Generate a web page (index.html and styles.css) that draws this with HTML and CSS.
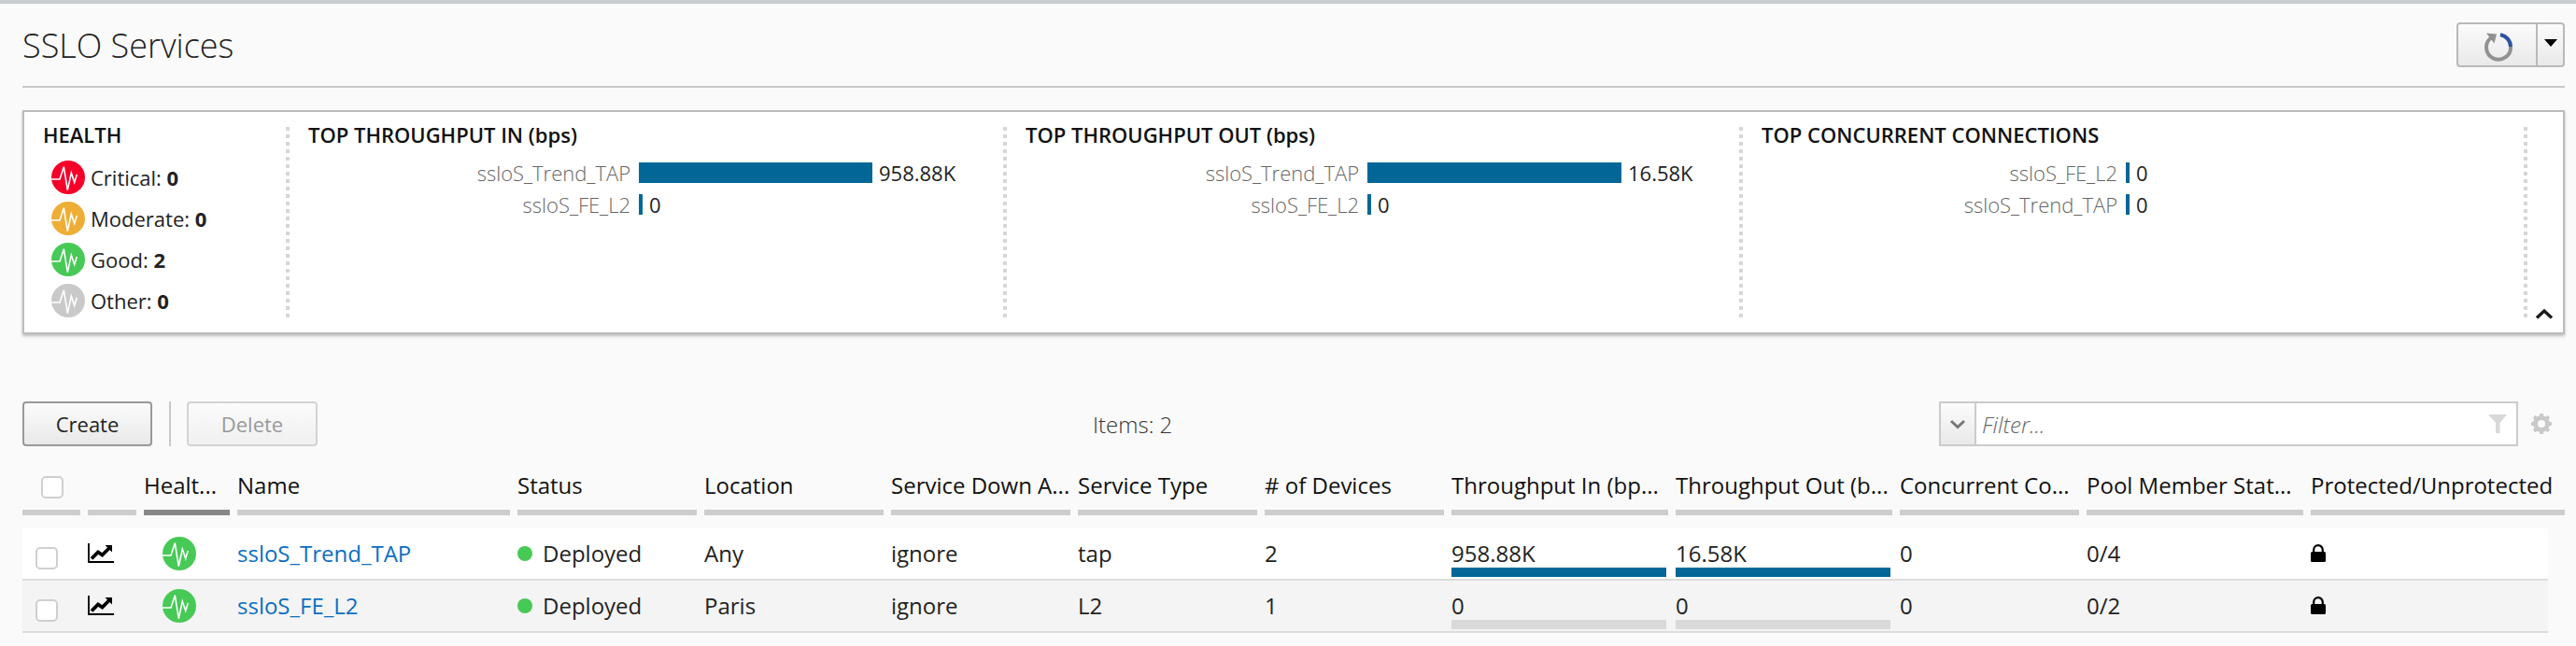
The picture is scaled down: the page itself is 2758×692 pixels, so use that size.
FILE: index.html
```html
<!DOCTYPE html>
<html>
<head>
  <meta charset="utf-8">
  <title>SSLO Services</title>
  <link rel="stylesheet" href="styles.css">
</head>
<body>
  <svg class="defs" width="0" height="0">
    <symbol id="pulse" viewBox="0 0 36 36">
      <circle cx="18" cy="18" r="18" fill="currentColor"/>
      <path d="M0 20H9L13.3 6.7 17.3 31.7 21.3 13.3 24.7 23.3 27.3 15" fill="none" stroke="#fff" stroke-width="1.6"/>
    </symbol>
    <symbol id="trend" viewBox="0 0 28 21">
      <path d="M1 0V20H28" fill="none" stroke="#000" stroke-width="1.8"/>
      <path d="M4 16.5L11 9.5 15.5 12.5 23 5" fill="none" stroke="#000" stroke-width="3.8"/>
      <path d="M18.5 2H26V9.5Z" fill="#000"/>
    </symbol>
    <symbol id="lock" viewBox="0 0 16 19">
      <path d="M3.2 9V6a4.8 4.8 0 0 1 9.6 0V9" fill="none" stroke="#000" stroke-width="2.2"/>
      <rect x="0" y="8" width="16" height="11" rx="1.5" fill="#000"/>
    </symbol>
  </svg>

  <div class="page">
    <header class="title-bar">
      <h1>SSLO Services</h1>
      <div class="refresh">
        <span class="refresh-main">
          <svg width="34" height="34" viewBox="0 0 34 34">
            <path d="M9 7.5A13 13 0 1 0 30 17" fill="none" stroke="#919191" stroke-width="4"/>
            <path d="M19 4.2A13 13 0 0 1 30 17" fill="none" stroke="#2b52a3" stroke-width="4"/>
            <path d="M4 2.5L15 3.5 12.5 13.5Z" fill="#919191"/>
          </svg>
        </span>
        <span class="refresh-drop"><i class="caret"></i></span>
      </div>
    </header>

    <section class="panel">
      <div class="pcol health">
        <h2>HEALTH</h2>
        <ul class="health-list">
          <li><svg class="hicon red"><use href="#pulse"/></svg>Critical:&nbsp;<b>0</b></li>
          <li><svg class="hicon amber"><use href="#pulse"/></svg>Moderate:&nbsp;<b>0</b></li>
          <li><svg class="hicon green"><use href="#pulse"/></svg>Good:&nbsp;<b>2</b></li>
          <li><svg class="hicon grey"><use href="#pulse"/></svg>Other:&nbsp;<b>0</b></li>
        </ul>
      </div>
      <div class="pcol chart-in">
        <h2>TOP THROUGHPUT IN (bps)</h2>
        <div class="bar-row"><span class="bar-label">ssloS_Trend_TAP</span><span class="bar" style="width:250px"></span><span class="bar-val">958.88K</span></div>
        <div class="bar-row"><span class="bar-label">ssloS_FE_L2</span><span class="bar" style="width:4px"></span><span class="bar-val">0</span></div>
      </div>
      <div class="pcol chart-out">
        <h2>TOP THROUGHPUT OUT (bps)</h2>
        <div class="bar-row"><span class="bar-label">ssloS_Trend_TAP</span><span class="bar" style="width:272px"></span><span class="bar-val">16.58K</span></div>
        <div class="bar-row"><span class="bar-label">ssloS_FE_L2</span><span class="bar" style="width:4px"></span><span class="bar-val">0</span></div>
      </div>
      <div class="pcol chart-conc">
        <h2>TOP CONCURRENT CONNECTIONS</h2>
        <div class="bar-row"><span class="bar-label">ssloS_FE_L2</span><span class="bar" style="width:4px"></span><span class="bar-val">0</span></div>
        <div class="bar-row"><span class="bar-label">ssloS_Trend_TAP</span><span class="bar" style="width:4px"></span><span class="bar-val">0</span></div>
      </div>
      <div class="collapse">
        <svg width="20" height="12" viewBox="0 0 20 12"><path d="M2 10.5L10 3 18 10.5" fill="none" stroke="#1c1c1c" stroke-width="3.4"/></svg>
      </div>
    </section>

    <div class="toolbar">
      <button class="btn">Create</button>
      <span class="tool-sep"></span>
      <button class="btn off">Delete</button>
      <span class="items">Items: 2</span>
      <div class="filter">
        <span class="filter-drop">
          <svg width="18" height="11" viewBox="0 0 18 11"><path d="M2 2L9 8.5 16 2" fill="none" stroke="#777" stroke-width="3"/></svg>
        </span>
        <span class="filter-text">Filter...</span>
        <svg class="funnel" width="20" height="20" viewBox="0 0 20 20"><path d="M0 0H20L12.5 9V20H8V9Z" fill="#d8d8d8"/></svg>
      </div>
      <svg class="gear" width="24" height="24" viewBox="0 0 24 24">
        <circle cx="12" cy="12" r="6.5" fill="none" stroke="#c9c9c9" stroke-width="5"/>
        <path d="M12 1V6M12 18V23M1 12H6M18 12H23M4.2 4.2L7.8 7.8M16.2 16.2L19.8 19.8M4.2 19.8L7.8 16.2M16.2 7.8L19.8 4.2" stroke="#c9c9c9" stroke-width="4"/>
      </svg>
    </div>

    <div class="grid head">
      <div class="th"><span class="check"></span></div>
      <div class="th"></div>
      <div class="th sorted">Healt...</div>
      <div class="th">Name</div>
      <div class="th">Status</div>
      <div class="th">Location</div>
      <div class="th">Service Down A...</div>
      <div class="th">Service Type</div>
      <div class="th"># of Devices</div>
      <div class="th">Throughput In (bp...</div>
      <div class="th">Throughput Out (b...</div>
      <div class="th">Concurrent Co...</div>
      <div class="th">Pool Member Stat...</div>
      <div class="th">Protected/Unprotected</div>
    </div>

    <div class="grid row">
      <div class="td"><span class="check"></span></div>
      <div class="td"><svg class="trend"><use href="#trend"/></svg></div>
      <div class="td mid"><svg class="hicon green"><use href="#pulse"/></svg></div>
      <div class="td"><a href="#">ssloS_Trend_TAP</a></div>
      <div class="td"><i class="dot"></i>Deployed</div>
      <div class="td">Any</div>
      <div class="td">ignore</div>
      <div class="td">tap</div>
      <div class="td">2</div>
      <div class="td meter">958.88K<i class="track"><i class="fill" style="width:100%"></i></i></div>
      <div class="td meter">16.58K<i class="track"><i class="fill" style="width:100%"></i></i></div>
      <div class="td">0</div>
      <div class="td">0/4</div>
      <div class="td"><svg class="lock"><use href="#lock"/></svg></div>
    </div>

    <div class="grid row alt">
      <div class="td"><span class="check"></span></div>
      <div class="td"><svg class="trend"><use href="#trend"/></svg></div>
      <div class="td mid"><svg class="hicon green"><use href="#pulse"/></svg></div>
      <div class="td"><a href="#">ssloS_FE_L2</a></div>
      <div class="td"><i class="dot"></i>Deployed</div>
      <div class="td">Paris</div>
      <div class="td">ignore</div>
      <div class="td">L2</div>
      <div class="td">1</div>
      <div class="td meter">0<i class="track"></i></div>
      <div class="td meter">0<i class="track"></i></div>
      <div class="td">0</div>
      <div class="td">0/2</div>
      <div class="td"><svg class="lock"><use href="#lock"/></svg></div>
    </div>
  </div>
</body>
</html>
```

FILE: styles.css
```css
* { box-sizing: border-box; }

html, body {
  margin: 0;
  height: 692px;
  overflow: hidden;
}

body {
  background: #fafafa;
  font-family: "Open Sans", sans-serif;
  font-size: 24px;
  color: #222;
}

.defs { position: absolute; }

.page {
  border-top: 4px solid #c9cdd0;
  padding: 0 12px 0 24px;
}

/* title */
.title-bar {
  height: 90px;
  border-bottom: 2px solid #c8c8c8;
  display: flex;
  justify-content: space-between;
  padding-top: 20px;
}

h1 {
  margin: 0;
  font-size: 36px;
  font-weight: 300;
  line-height: 50px;
  color: #222;
}

.refresh {
  width: 116px;
  height: 48px;
  border: 2px solid #b9b9b9;
  border-radius: 4px;
  background: linear-gradient(#fbfbfb, #e9e9e9);
  display: flex;
}

.refresh-main {
  flex: 1;
  border-right: 2px solid #b9b9b9;
  display: flex;
  align-items: center;
  justify-content: center;
  padding: 4px 0 0 2px;
}

.refresh-drop {
  width: 27px;
  display: flex;
  align-items: center;
  justify-content: center;
  padding-bottom: 4px;
}

.caret {
  border-left: 7px solid transparent;
  border-right: 7px solid transparent;
  border-top: 8px solid #000;
}

/* summary panel */
.panel {
  margin-top: 24px;
  height: 240px;
  border: 2px solid #bcbcbc;
  background: #fff;
  box-shadow: 0 2px 3px #bbb;
  display: flex;
  padding: 16px 0 14px;
}

.pcol {
  background: linear-gradient(#d6d6d6 50%, transparent 50%) right top / 4px 8px repeat-y;
  padding-left: 20px;
}

.health { width: 284px; }
.chart-in { width: 768px; }
.chart-out { width: 788px; }
.chart-conc { width: 840px; }

h2 {
  margin: -2px 0 20px;
  font-size: 22px;
  font-weight: 600;
  line-height: 20px;
  color: #111;
}

.health h2 { margin-bottom: 14px; }

.health-list {
  list-style: none;
  margin: 0;
  padding: 0 0 0 9px;
}

.health-list li {
  height: 44px;
  display: flex;
  align-items: center;
  font-size: 22px;
  line-height: 36px;
}

.health-list b { font-weight: 700; }

.hicon {
  width: 36px;
  height: 36px;
  margin-right: 6px;
  flex: none;
}

.red { color: #f6002a; }
.amber { color: #eeae36; }
.green { color: #47c956; }
.grey { color: #c9c9c9; }

.bar-row {
  height: 22px;
  margin-bottom: 12px;
  display: flex;
  align-items: center;
  font-size: 22px;
}

.bar-label {
  color: #666;
  text-align: right;
  margin-right: 9px;
  font-weight: 300;
}

.chart-in .bar-label { width: 345px; }
.chart-out .bar-label { width: 357px; }
.chart-conc .bar-label { width: 381px; }

.bar {
  height: 22px;
  background: #026797;
}

.bar-val { margin-left: 7px; }

.collapse {
  flex: 1;
  display: flex;
  align-items: flex-end;
  padding-left: 8px;
}

/* toolbar */
.toolbar {
  margin-top: 72px;
  height: 48px;
  display: flex;
  align-items: center;
}

.btn {
  width: 139px;
  height: 48px;
  font: 22px "Open Sans", sans-serif;
  color: #222;
  border: 2px solid #999;
  border-radius: 4px;
  background: linear-gradient(#fbfbfb, #e9e9e9);
}

.btn.off {
  width: 140px;
  color: #999;
  border-color: #d3d3d3;
  background: linear-gradient(#fbfbfb, #f0f0f0);
}

.tool-sep {
  width: 2px;
  height: 48px;
  background: #c8c8c8;
  margin: 0 17px 0 18px;
}

.items {
  margin-left: 830px;
  width: 906px;
  font-size: 24px;
  font-weight: 300;
  color: #333;
}

.filter {
  width: 620px;
  height: 48px;
  border: 2px solid #cbcbcb;
  background: #fff;
  display: flex;
  align-items: center;
}

.filter-drop {
  width: 38px;
  height: 100%;
  background: linear-gradient(#fbfbfb, #e9e9e9);
  border-right: 2px solid #cbcbcb;
  display: flex;
  align-items: center;
  justify-content: center;
}

.filter-text {
  flex: 1;
  padding-left: 6px;
  font-size: 24px;
  font-style: italic;
  font-weight: 300;
  color: #666;
}

.funnel { margin-right: 10px; }
.gear { margin-left: 13px; }

/* table */
.grid {
  display: grid;
  grid-template-columns: 62px 52px 92px 292px 192px 192px 192px 192px 192px 232px 232px 192px 232px minmax(0, 1fr);
  column-gap: 8px;
}

.head { height: 74px; }

.th {
  border-bottom: 6px solid #cdcdcd;
  padding-top: 25px;
  line-height: 34px;
  white-space: nowrap;
  overflow: hidden;
  color: #111;
}

.th.sorted { border-bottom-color: #888; }

.check {
  display: block;
  width: 24px;
  height: 24px;
  border: 2px solid #cfcfcf;
  border-radius: 5px;
  background: #fff;
}

.th .check { margin: 7px 0 0 20px; }

.row {
  width: 2704px;
  height: 56px;
  background: #fff;
  border-bottom: 2px solid #dcdcdc;
}

.head + .row { margin-top: 14px; }

.row.alt { background: #f4f4f4; }

.td {
  display: flex;
  align-items: center;
  white-space: nowrap;
  height: 54px;
  padding-bottom: 2px;
  color: #222;
}

.td .check { margin: 12px 0 0 14px; }

.td.mid { padding-left: 20px; }
.td.mid .hicon { margin: 2px 0 0; }

.td a {
  color: #0b6fc2;
  text-decoration: none;
}

.trend { width: 28px; height: 21px; }

.lock { width: 16px; height: 19px; margin-top: 1px; }

.dot {
  width: 16px;
  height: 16px;
  border-radius: 50%;
  background: #47c956;
  margin: 2px 11px 0 0;
}

.meter { position: relative; }

.track {
  position: absolute;
  left: 0;
  bottom: 2px;
  width: 230px;
  height: 10px;
  background: #d9d9d9;
}

.fill {
  display: block;
  height: 100%;
  background: #026797;
}
```
